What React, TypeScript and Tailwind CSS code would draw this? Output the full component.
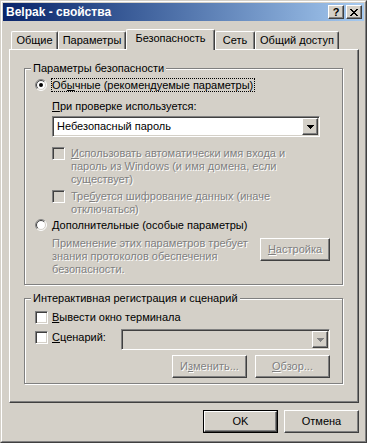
import React from "react";

const raised =
  "border border-t-white border-l-white border-r-[#404040] border-b-[#404040] shadow-[inset_-1px_-1px_0_#808080]";
const sunken =
  "border border-t-[#808080] border-l-[#808080] border-r-white border-b-white shadow-[inset_1px_1px_0_#404040,inset_-1px_-1px_0_#d4d0c8]";
const grayText = "text-[#808080] [text-shadow:1px_1px_0_#fff]";

function Btn({ w, def, disabled, children }: { w: string; def?: boolean; disabled?: boolean; children: React.ReactNode }) {
  const face = (
    <div className={`flex h-full w-full items-center justify-center ${raised} ${disabled ? grayText : ""}`}>
      {children}
    </div>
  );
  return <div className={`${w} h-[23px] shrink-0 ${def ? "border border-black" : ""}`}>{face}</div>;
}

function Check({ disabled }: { disabled?: boolean }) {
  return <div className={`h-[13px] w-[13px] shrink-0 ${sunken} ${disabled ? "bg-[#d4d0c8]" : "bg-white"}`} />;
}

function Radio({ checked }: { checked?: boolean }) {
  return (
    <svg width="12" height="12" viewBox="0 0 12 12" className="shrink-0">
      <circle cx="6" cy="6" r="5" fill="#fff" />
      <path d="M2.111 9.889A5.5 5.5 0 0 1 9.889 2.111" fill="none" stroke="#808080" />
      <path d="M9.889 2.111A5.5 5.5 0 0 1 2.111 9.889" fill="none" stroke="#fff" />
      <path d="M2.818 9.182A4.5 4.5 0 0 1 9.182 2.818" fill="none" stroke="#404040" />
      <path d="M9.182 2.818A4.5 4.5 0 0 1 2.818 9.182" fill="none" stroke="#d4d0c8" />
      {checked && <circle cx="6" cy="6" r="2" fill="#000" />}
    </svg>
  );
}

function Combo({ w, text, disabled }: { w: string; text?: string; disabled?: boolean }) {
  return (
    <div className={`${w} flex h-[21px] shrink-0 items-center p-px ${sunken} ${disabled ? "bg-[#d4d0c8]" : "bg-white"}`}>
      <div className="flex-1 pl-[3px] leading-[13px]">{text}</div>
      <div className={`flex h-[17px] w-[16px] items-center justify-center bg-[#d4d0c8] ${raised}`}>
        <svg width="7" height="4" viewBox="0 0 7 4" shapeRendering="crispEdges">
          <path d="M0 0h7v1h-1v1h-1v1h-1v1h-1v-1h-1v-1h-1v-1h-1z" fill={disabled ? "#808080" : "#000"} />
        </svg>
      </div>
    </div>
  );
}

function Tab({ w, sel, children }: { w: string; sel?: boolean; children: React.ReactNode }) {
  if (sel)
    return (
      <div
        className={`${w} relative z-10 -mb-px flex h-[21px] justify-center rounded-t-[2px] border-t border-r border-l border-t-white border-r-[#404040] border-l-white bg-[#d4d0c8] pt-[2px] shadow-[inset_-1px_0_0_#808080]`}
      >
        {children}
      </div>
    );
  return (
    <div
      className={`${w} flex h-[18px] justify-center rounded-t-[2px] border-t border-r border-l border-t-white border-r-[#404040] border-l-white pt-[2px] shadow-[inset_-1px_0_0_#808080]`}
    >
      {children}
    </div>
  );
}

function Group({ title, children, className }: { title: string; children: React.ReactNode; className?: string }) {
  return (
    <fieldset
      className={`ml-[14px] w-[319px] border border-[#808080] shadow-[inset_1px_1px_0_#fff,1px_1px_0_#fff] ${className ?? ""}`}
    >
      <legend className="ml-[6px] bg-[#d4d0c8] px-[2px] leading-[13px]">{title}</legend>
      {children}
    </fieldset>
  );
}

export default function App() {
  return (
    <div className="h-[443px] w-[367px] border border-t-[#d4d0c8] border-r-[#404040] border-b-[#404040] border-l-[#d4d0c8] bg-[#d4d0c8] font-['Liberation_Sans',Arial,sans-serif] text-[11px] leading-[13px] text-black">
      <div className="flex h-full flex-col border border-t-white border-r-[#808080] border-b-[#808080] border-l-white p-px">
        {/* caption */}
        <div className="flex h-[18px] items-center bg-linear-to-r from-[#0a246a] to-[#a6caf0] pr-[2px] pl-[3px]">
          <span className="flex-1 text-[12px] font-bold text-white">Belpak - свойства</span>
          <div className={`flex h-[14px] w-[16px] items-center justify-center bg-[#d4d0c8] ${raised}`}>
            <span className="text-[11px] leading-[11px] font-bold">?</span>
          </div>
          <div className={`ml-[2px] flex h-[14px] w-[16px] items-center justify-center bg-[#d4d0c8] ${raised}`}>
            <svg width="8" height="7" viewBox="0 0 8 7" shapeRendering="crispEdges">
              <path d="M0 0h2v1h1v1h2v-1h1v-1h2v1h-1v1h-1v1h-1v1h1v1h1v1h1v1h-2v-1h-1v-1h-2v1h-1v1h-2v-1h1v-1h1v-1h1v-1h-1v-1h-1v-1h-1z" fill="#000" />
            </svg>
          </div>
        </div>

        {/* tabs */}
        <div className="mt-[8px] ml-[6px] flex w-[350px] items-end pl-[2px]">
          <Tab w="w-[47px]">Общие</Tab>
          <Tab w="w-[68px]">Параметры</Tab>
          <Tab w="w-[89px]" sel>
            Безопасность
          </Tab>
          <Tab w="w-[40px]">Сеть</Tab>
          <Tab w="w-[84px]">Общий доступ</Tab>
        </div>

        {/* tab page */}
        <div className={`ml-[6px] h-[354px] w-[350px] pt-[12px] ${raised}`}>
          <Group title="Параметры безопасности" className="pb-[8px]">
            <div className="mt-[3px] flex items-center pl-[10px]">
              <Radio checked />
              <span className="ml-[4px] border border-dotted border-black pr-px leading-[12px]">
                Об<u className="underline-offset-[1px]">ы</u>чные (рекомендуемые параметры)
              </span>
            </div>
            <div className="mt-[8px] pl-[27px]">
              <u className="underline-offset-[1px]">П</u>ри проверке используется:
            </div>
            <div className="mt-[3px] pl-[27px]">
              <Combo w="w-[268px]" text="Небезопасный пароль" />
            </div>
            <div className="mt-[10px] flex items-start pl-[27px]">
              <Check disabled />
              <div className={`ml-[6px] ${grayText}`}>
                <u className="underline-offset-[1px]">И</u>спользовать автоматически имя входа и
                <br />
                пароль из Windows (и имя домена, если
                <br />
                существует)
              </div>
            </div>
            <div className="mt-[4px] flex items-start pl-[27px]">
              <Check disabled />
              <div className={`ml-[6px] ${grayText}`}>
                Тре<u className="underline-offset-[1px]">б</u>уется шифрование данных (иначе
                <br />
                отключаться)
              </div>
            </div>
            <div className="mt-[2px] flex items-center pl-[10px]">
              <Radio />
              <span className="ml-[4px] border border-transparent leading-[12px]">
                <u className="underline-offset-[1px]">Д</u>ополнительные (особые параметры)
              </span>
            </div>
            <div className="mt-[5px] flex items-start pr-[12px] pl-[27px]">
              <div className={`flex-1 ${grayText}`}>
                Применение этих параметров требует
                <br />
                знания протоколов обеспечения
                <br />
                безопасности.
              </div>
              <div className="mt-px">
                <Btn w="w-[70px]" disabled>
                  <span>
                    <u className="underline-offset-[1px]">Н</u>астройка
                  </span>
                </Btn>
              </div>
            </div>
          </Group>

          <Group title="Интерактивная регистрация и сценарий" className="mt-[7px] pb-[5px]">
            <div className="mt-[6px] flex items-start pl-[10px]">
              <Check />
              <span className="ml-[4px]">
                <u className="underline-offset-[1px]">В</u>ывести окно терминала
              </span>
            </div>
            <div className="mt-[5px] flex items-start">
              <div className="flex w-[96px] items-start pt-[2px] pl-[10px]">
                <Check />
                <span className="ml-[4px]">
                  <u className="underline-offset-[1px]">С</u>ценарий:
                </span>
              </div>
              <Combo w="w-[209px]" disabled />
            </div>
            <div className="mt-[5px] flex justify-end gap-[8px] pr-[12px]">
              <Btn w="w-[75px]" disabled>
                <span>
                  И<u className="underline-offset-[1px]">з</u>менить...
                </span>
              </Btn>
              <Btn w="w-[75px]" disabled>
                <span>
                  <u className="underline-offset-[1px]">О</u>бзор...
                </span>
              </Btn>
            </div>
          </Group>
        </div>

        {/* dialog buttons */}
        <div className="mt-[7px] ml-[6px] flex w-[350px] justify-end gap-[6px]">
          <Btn w="w-[75px]" def>
            OK
          </Btn>
          <Btn w="w-[75px]">Отмена</Btn>
        </div>
      </div>
    </div>
  );
}
